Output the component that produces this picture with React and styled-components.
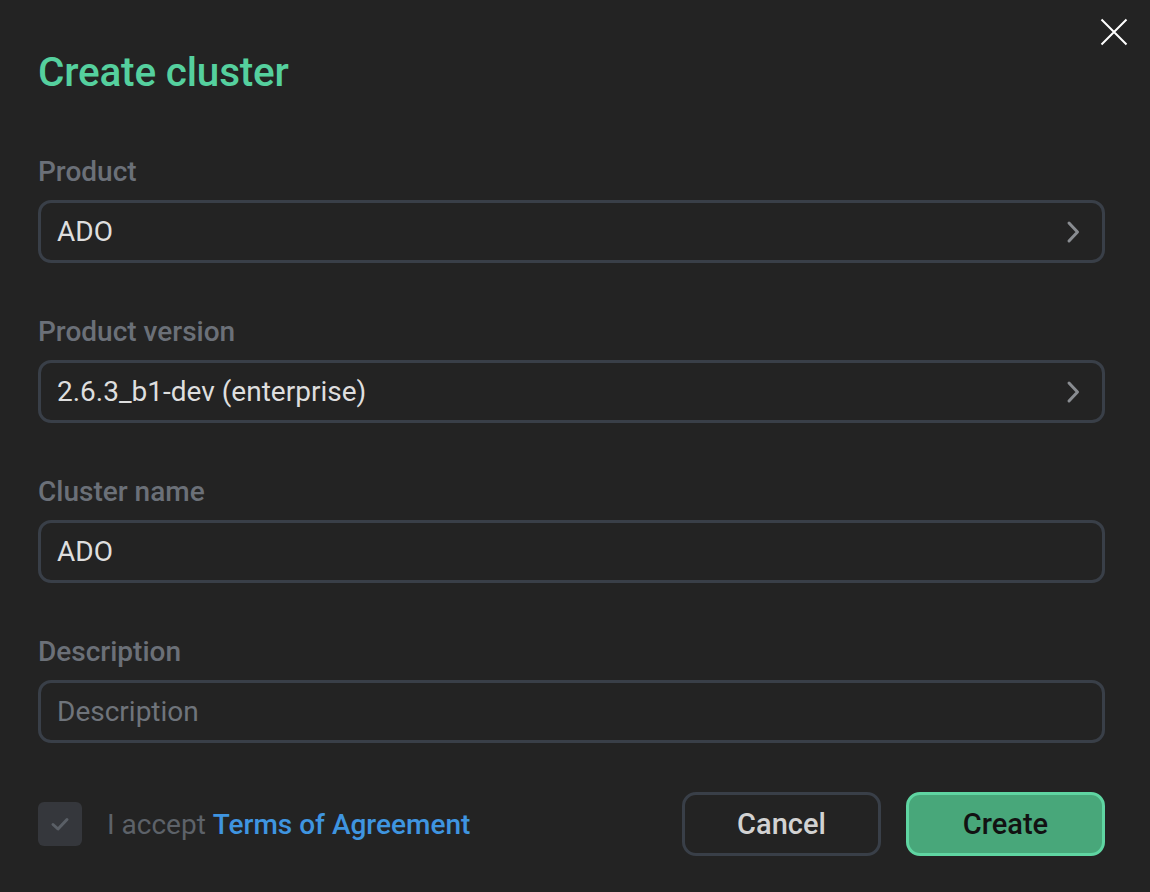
import React from "react";
import styled, { createGlobalStyle } from "styled-components";

const Global = createGlobalStyle`
  html, body { margin: 0; padding: 0; background: #232323; }
  body { font-family: Roboto, "Liberation Sans", sans-serif; }
  * { box-sizing: border-box; }
`;

const Dialog = styled.div`
  position: relative;
  width: 1150px;
  height: 892px;
  background: #232323;
  padding: 48px 45px 0 38px;
  display: flex;
  flex-direction: column;
`;

const Title = styled.h1`
  margin: 0 0 60px;
  font-size: 40.5px;
  line-height: 48px;
  font-weight: 500;
  color: #55d09e;
  letter-spacing: -0.2px;
`;

const CloseButton = styled.button`
  position: absolute;
  top: 17px;
  right: 21px;
  width: 30px;
  height: 30px;
  padding: 0;
  border: none;
  background: transparent;
  display: flex;
  align-items: center;
  justify-content: center;
  cursor: pointer;
`;

const Field = styled.div`
  display: flex;
  flex-direction: column;
  gap: 12px;
  & + & { margin-top: 53px; }
`;

const Label = styled.label`
  font-size: 28px;
  line-height: 32px;
  font-weight: 500;
  color: #6b7078;
`;

const Box = styled.div`
  height: 63px;
  border: 3px solid #393f48;
  border-radius: 13px;
  display: flex;
  align-items: center;
  justify-content: space-between;
  padding: 0 21px 0 16px;
  font-size: 28px;
  color: ${(p) => (p.$placeholder ? "#6f747b" : "#dedede")};
  cursor: ${(p) => (p.$select ? "pointer" : "text")};
`;

const Footer = styled.div`
  margin-top: 49px;
  display: flex;
  align-items: center;
  justify-content: space-between;
`;

const Accept = styled.div`
  display: flex;
  align-items: center;
  gap: 25px;
  font-size: 28px;
  color: #5d6269;
`;

const Checkbox = styled.div`
  width: 44px;
  height: 44px;
  border-radius: 6px;
  background: #35373c;
  display: flex;
  align-items: center;
  justify-content: center;
`;

const Link = styled.a`
  color: #3f95e0;
  font-weight: 500;
  text-decoration: none;
`;

const Buttons = styled.div`
  display: flex;
  gap: 25px;
`;

const Button = styled.button`
  width: 199px;
  height: 64px;
  border-radius: 14px;
  border: 3px solid ${(p) => (p.$primary ? "#5fd5a2" : "#393f48")};
  background: ${(p) => (p.$primary ? "#48a77a" : "transparent")};
  color: ${(p) => (p.$primary ? "#121212" : "#d2d2d2")};
  font-family: Roboto, "Liberation Sans", sans-serif;
  font-size: 29px;
  font-weight: 500;
  cursor: pointer;
`;

const Chevron = () => (
  <svg width="16" height="24" viewBox="0 0 16 24" fill="none">
    <path d="M4 3 L12.5 12 L4 21" stroke="#898c91" strokeWidth="3" strokeLinecap="round" strokeLinejoin="round" />
  </svg>
);

const fields = [
  { label: "Product", value: "ADO", select: true },
  { label: "Product version", value: "2.6.3_b1-dev (enterprise)", select: true },
  { label: "Cluster name", value: "ADO" },
  { label: "Description", placeholder: "Description" },
];

export default function App() {
  return (
    <>
      <Global />
      <Dialog>
        <CloseButton aria-label="Close">
          <svg width="28" height="28" viewBox="0 0 28 28">
            <path d="M1.5 1.5 L26.5 26.5 M26.5 1.5 L1.5 26.5" stroke="#ffffff" strokeWidth="2" />
          </svg>
        </CloseButton>
        <Title>Create cluster</Title>
        {fields.map((f) => (
          <Field key={f.label}>
            <Label>{f.label}</Label>
            <Box $select={f.select} $placeholder={!f.value}>
              <span>{f.value || f.placeholder}</span>
              {f.select && <Chevron />}
            </Box>
          </Field>
        ))}
        <Footer>
          <Accept>
            <Checkbox>
              <svg width="22" height="22" viewBox="0 0 22 22" fill="none">
                <path d="M4 11.5 L9 16 L18 6.5" stroke="#5a5f66" strokeWidth="3" strokeLinecap="round" strokeLinejoin="round" />
              </svg>
            </Checkbox>
            <span>
              I accept <Link href="#">Terms of Agreement</Link>
            </span>
          </Accept>
          <Buttons>
            <Button>Cancel</Button>
            <Button $primary>Create</Button>
          </Buttons>
        </Footer>
      </Dialog>
    </>
  );
}
